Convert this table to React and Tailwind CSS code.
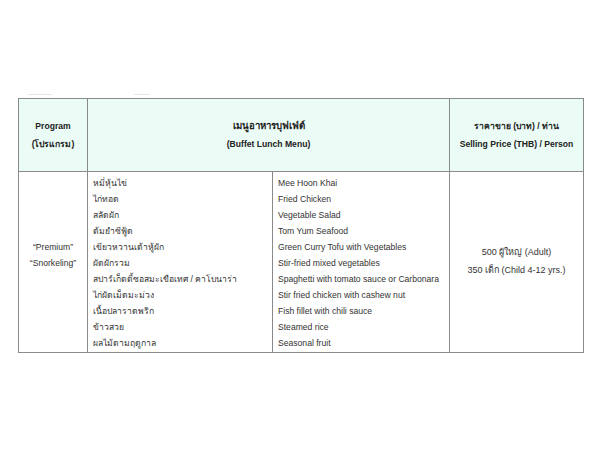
import React from 'react';

const items = [
  ['หมี่หุ้นไข่', 'Mee Hoon Khai'],
  ['ไก่ทอด', 'Fried Chicken'],
  ['สลัดผัก', 'Vegetable Salad'],
  ['ต้มยำซีฟู้ด', 'Tom Yum Seafood'],
  ['เขียวหวานเต้าหู้ผัก', 'Green Curry Tofu with Vegetables'],
  ['ผัดผักรวม', 'Stir-fried mixed vegetables'],
  ['สปาร์เก็ตตี้ซอสมะเขือเทศ / คาโบนาร่า', 'Spaghetti with tomato sauce or Carbonara'],
  ['ไก่ผัดเม็ดมะม่วง', 'Stir fried chicken with cashew nut'],
  ['เนื้อปลาราดพริก', 'Fish fillet with chili sauce'],
  ['ข้าวสวย', 'Steamed rice'],
  ['ผลไม้ตามฤดูกาล', 'Seasonal fruit'],
];

const App = () => {
  return (
    <div
      className="w-[600px] h-[450px] bg-white pt-[94px] pl-[18px] text-[#333]"
      style={{ fontFamily: '"Liberation Sans", "Noto Sans", sans-serif' }}
    >
      {/* faint marks above the table */}
      <div className="flex h-[1px] mb-[3px]">
        <div className="ml-[10px] w-[24px] bg-[#e6e6e6]" />
        <div className="ml-[82px] w-[16px] bg-[#e6e6e6]" />
      </div>

      <div className="w-[566px] border border-[#8a8a8a]">
        {/* Header */}
        <div className="flex h-[73px] bg-[#ebfbf5] border-b border-[#8a8a8a] text-[8.6px] font-bold text-[#222]">
          <div className="w-[69px] border-r border-[#8a8a8a] flex flex-col items-center justify-center gap-[5px]">
            <div>Program</div>
            <div>(โปรแกรม)</div>
          </div>
          <div className="w-[362px] border-r border-[#8a8a8a] flex flex-col items-center justify-center gap-[4px]">
            <div className="text-[9.6px]">เมนูอาหารบุฟเฟ่ต์</div>
            <div>(Buffet Lunch Menu)</div>
          </div>
          <div className="flex-1 flex flex-col items-center justify-center gap-[5px]">
            <div>ราคาขาย (บาท) / ท่าน</div>
            <div>Selling Price (THB) / Person</div>
          </div>
        </div>

        {/* Body */}
        <div className="flex h-[180px] text-[8.6px]">
          <div className="w-[69px] border-r border-[#8a8a8a] flex flex-col items-center pt-[67px]">
            <div className="h-[16px] flex items-center">“Premium”</div>
            <div className="h-[16px] flex items-center">“Snorkeling”</div>
          </div>
          <div className="w-[185px] border-r border-[#8a8a8a] pt-[3px] pl-[5px] text-[8.6px]">
            {items.map(([th]) => (
              <div key={th} className="h-[16px] flex items-center whitespace-nowrap">{th}</div>
            ))}
          </div>
          <div className="w-[177px] border-r border-[#8a8a8a] pt-[3px] pl-[5px]">
            {items.map(([, en]) => (
              <div key={en} className="h-[16px] flex items-center whitespace-nowrap">{en}</div>
            ))}
          </div>
          <div className="flex-1 flex flex-col items-center justify-center text-[9px]">
            <div className="h-[18px] flex items-center">500 ผู้ใหญ่ (Adult)</div>
            <div className="h-[18px] flex items-center">350 เด็ก (Child 4-12 yrs.)</div>
          </div>
        </div>
      </div>
    </div>
  );
};

export default App;
